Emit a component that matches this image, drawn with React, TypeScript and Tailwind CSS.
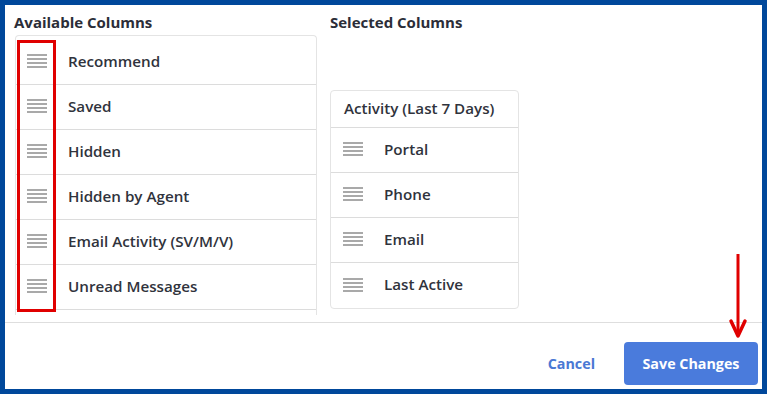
import React from 'react';

const available = ['Recommend', 'Saved', 'Hidden', 'Hidden by Agent', 'Email Activity (SV/M/V)', 'Unread Messages', ''];
const selected = ['Portal', 'Phone', 'Email', 'Last Active'];

const DragHandle: React.FC = () => (
  <svg width="20" height="14" viewBox="0 0 20 14" className="shrink-0">
    <rect x="0" y="0" width="20" height="2" fill="#a9a9a9" />
    <rect x="0" y="4" width="20" height="2" fill="#a9a9a9" />
    <rect x="0" y="8" width="20" height="2" fill="#a9a9a9" />
    <rect x="0" y="12" width="20" height="2" fill="#a9a9a9" />
  </svg>
);

const App: React.FC = () => {
  return (
    <div
      className="relative w-[767px] h-[394px] border-[5px] border-[#00489b] bg-white flex flex-col overflow-hidden"
      style={{ fontFamily: '"Open Sans", "Liberation Sans", sans-serif' }}
    >
      <div className="flex h-[317px] shrink-0 pt-[7px]">
        {/* available */}
        <div className="flex flex-col pl-[9px] w-[325px]">
          <h3 className="h-[20px] leading-[20px] text-[15px] font-bold text-[#2b2d38]">Available Columns</h3>
          <div className="mt-[3px] ml-[1px] w-[302px] h-[280px] border-x border-t border-[#e4e4e4] rounded-t-[4px] pt-[4px] overflow-hidden">
            {available.map((name, i) => (
              <div key={i} className="h-[45px] flex items-center border-b border-[#dcdcdc] pl-[11px] pb-[2px]">
                {name && <DragHandle />}
                {name && <span className="ml-[21px] text-[15.2px] font-semibold text-[#30333c]">{name}</span>}
              </div>
            ))}
          </div>
        </div>

        {/* selected */}
        <div className="flex flex-col">
          <h3 className="h-[20px] leading-[20px] text-[15px] font-bold text-[#2b2d38]">Selected Columns</h3>
          <div className="mt-[58px] w-[189px] border border-[#e4e4e4] rounded-[4px]">
            <div className="h-[37px] flex items-center border-b border-[#dcdcdc] pl-[13px] pb-[1px] text-[15.2px] font-semibold text-[#30333c]">
              Activity (Last 7 Days)
            </div>
            {selected.map((name, i) => (
              <div
                key={name}
                className={`h-[45px] flex items-center pl-[12px] pb-[2px] ${i < selected.length - 1 ? 'border-b border-[#dcdcdc]' : ''}`}
              >
                <DragHandle />
                <span className="ml-[21px] text-[15.2px] font-semibold text-[#30333c]">{name}</span>
              </div>
            ))}
          </div>
        </div>
      </div>

      {/* footer */}
      <div className="flex-1 border-t border-[#dedede] flex items-start justify-end pt-[19px] pr-[4px]">
        <button className="h-[43px] px-[10px] text-[14.3px] font-bold text-[#4a78d4] mr-[19px]">Cancel</button>
        <button className="h-[43px] w-[134px] rounded-[4px] bg-[#4a7bdc] text-[14.3px] font-bold text-white">
          Save Changes
        </button>
      </div>

      {/* annotation box */}
      <div className="absolute left-[12px] top-[35px] w-[39px] h-[272px] border-[3px] border-[#e00000]" />

      {/* annotation arrow */}
      <svg className="absolute left-[723px] top-[245px]" width="22" height="92" viewBox="0 0 22 92">
        <line x1="10" y1="4" x2="10" y2="84" stroke="#e00000" strokeWidth="3" />
        <polyline points="3,71 10,86 17,71" fill="none" stroke="#e00000" strokeWidth="3.5" strokeLinecap="round" strokeLinejoin="round" />
      </svg>
    </div>
  );
};

export default App;
